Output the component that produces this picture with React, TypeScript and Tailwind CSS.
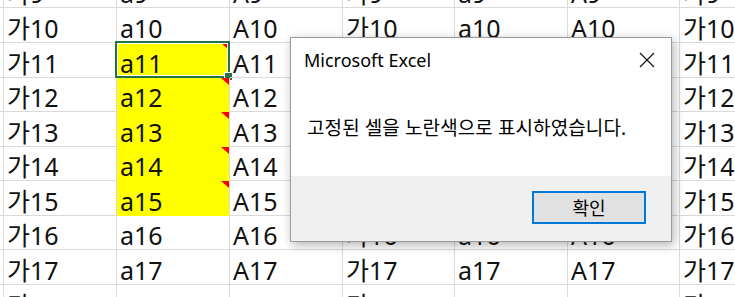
const rows = [
  { n: 9, h: 'h-[35px]' },
  { n: 10, h: 'h-[35px]' },
  { n: 11, h: 'h-[35px]' },
  { n: 12, h: 'h-[34px]' },
  { n: 13, h: 'h-[35px]' },
  { n: 14, h: 'h-[34px]' },
  { n: 15, h: 'h-[35px]' },
  { n: 16, h: 'h-[34px]' },
  { n: 17, h: 'h-[35px]' },
  { n: 18, h: 'h-[35px]' },
];

const colWidths = ['w-[113px]', 'w-[113px]', 'w-[113px]', 'w-[112px]', 'w-[113px]', 'w-[112px]', 'w-[113px]'];
const prefixes = ['가', 'a', 'A', '가', 'a', 'A', '가'];

// yellow "fixed" cells: column b, rows 11-15
const isYellow = (col: number, n: number) => col === 1 && n >= 11 && n <= 15;

const App = () => {
  return (
    <div
      className="relative w-[735px] h-[297px] overflow-hidden bg-white text-black"
      style={{ fontFamily: '"Noto Sans", "Noto Sans CJK KR", sans-serif' }}
    >
      <div className="-mt-[27px] flex flex-col">
        {rows.map(row => (
          <div key={row.n} className={`flex shrink-0 ${row.h}`}>
            <div className="w-[4px] shrink-0 border-r border-b border-[#dadada]" />
            {colWidths.map((w, i) => {
              const yellow = isYellow(i, row.n);
              return (
                <div
                  key={i}
                  className={`relative ${w} shrink-0 border-r border-b flex items-end pl-[3px] pb-[1px] text-[25px] leading-none whitespace-nowrap text-[#111] ${
                    yellow ? 'bg-[#ffff00] border-r-[#dadada] border-b-[#ffff00]' : 'border-[#dadada]'
                  }`}
                >
                  {prefixes[i]}
                  {row.n}
                  {yellow && (
                    <div className="absolute top-0 right-0 w-0 h-0 border-t-[7px] border-t-[#ff0000] border-l-[8px] border-l-transparent" />
                  )}
                  {i === 1 && row.n === 11 && (
                    <>
                      <div className="absolute -left-[2px] -top-[2px] -right-[1px] -bottom-[1px] border-2 border-[#217346]">
                        <div className="w-full h-full border border-white" />
                      </div>
                      <div className="absolute -right-[4px] -bottom-[4px] w-[9px] h-[9px] bg-[#217346] border border-white" />
                    </>
                  )}
                </div>
              );
            })}
          </div>
        ))}
      </div>

      {/* message box */}
      <div className="absolute left-[290px] top-[37px] w-[382px] h-[205px] bg-white border border-[#9a9a9a] shadow-[2px_3px_10px_rgba(0,0,0,0.3)] flex flex-col">
        <div className="h-[138px] shrink-0">
          <div className="flex items-center justify-between pt-[10px] pl-[13px] pr-[16px]">
            <span className="text-[18px] leading-[24px] text-black">Microsoft Excel</span>
            <svg width="16" height="16" viewBox="0 0 16 16" className="text-[#1a1a1a]">
              <path d="M1 1 L15 15 M15 1 L1 15" stroke="currentColor" strokeWidth="1.3" fill="none" />
            </svg>
          </div>
          <p className="mt-[44px] pl-[16px] text-[19px] tracking-[0.1px] leading-[24px] text-black whitespace-nowrap">
            고정된 셀을 노란색으로 표시하였습니다.
          </p>
        </div>
        <div className="flex-1 bg-[#f0f0f0] flex justify-end items-start pt-[15px] pr-[25px]">
          <button className="w-[114px] h-[33px] border-2 border-[#0078d7] bg-[#e1e1e1] text-[18px] leading-none text-black flex items-center justify-center">
            확인
          </button>
        </div>
      </div>
    </div>
  );
};

export default App;
